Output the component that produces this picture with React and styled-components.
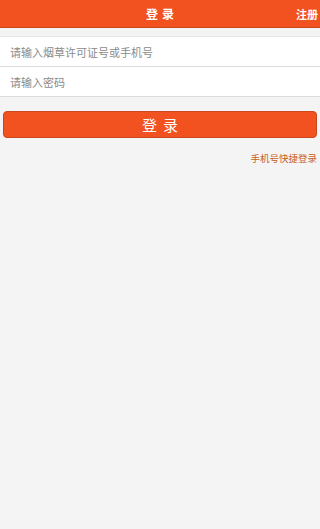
import React from 'react';
import styled, { createGlobalStyle } from 'styled-components';

const GlobalStyle = createGlobalStyle`
  html, body {
    margin: 0;
    padding: 0;
    background: #f4f4f4;
    font-family: "Noto Sans CJK SC", "Noto Sans", sans-serif;
  }
  * { box-sizing: border-box; }
`;

const Page = styled.div`
  width: 320px;
  min-height: 529px;
  background: #f4f4f4;
`;

const Header = styled.div`
  height: 28px;
  background: #f1521f;
  border-bottom: 1px solid #c9451b;
  display: flex;
  align-items: center;
  justify-content: center;
  position: relative;
`;

const Title = styled.div`
  color: #fff;
  font-size: 12px;
  font-weight: bold;
  letter-spacing: 4px;
  padding-left: 4px;
`;

const RegisterLink = styled.a`
  position: absolute;
  right: 2px;
  top: 6px;
  color: #fff;
  font-size: 11px;
  font-weight: bold;
  text-decoration: none;
`;

const Form = styled.div`
  margin-top: 8px;
  background: #fff;
  border-top: 1px solid #e6e6e6;
`;

const Field = styled.input`
  display: block;
  width: 100%;
  height: 30px;
  border: none;
  border-bottom: 1px solid #dcdcdc;
  padding: 0 10px;
  font-size: 11px;
  font-family: inherit;
  color: #333;
  background: #fff;
  outline: none;
  &::placeholder {
    color: #8a8a8a;
  }
`;

const Actions = styled.div`
  padding: 14px 3px 0;
`;

const LoginButton = styled.button`
  display: block;
  width: 100%;
  height: 27px;
  border: 1px solid #c8471c;
  border-radius: 4px;
  background: #f1521f;
  color: #fff;
  font-family: inherit;
  font-size: 15px;
  letter-spacing: 6px;
  padding: 0 0 0 6px;
`;

const QuickRow = styled.div`
  display: flex;
  justify-content: flex-end;
  padding: 13px 0 0;
`;

const QuickLink = styled.a`
  color: #c8611f;
  font-size: 9.5px;
  text-decoration: none;
`;

export default function App() {
  return (
    <Page>
      <GlobalStyle />
      <Header>
        <Title>登录</Title>
        <RegisterLink>注册</RegisterLink>
      </Header>
      <Form>
        <Field placeholder="请输入烟草许可证号或手机号" />
        <Field type="password" placeholder="请输入密码" />
      </Form>
      <Actions>
        <LoginButton>登录</LoginButton>
        <QuickRow>
          <QuickLink>手机号快捷登录</QuickLink>
        </QuickRow>
      </Actions>
    </Page>
  );
}
